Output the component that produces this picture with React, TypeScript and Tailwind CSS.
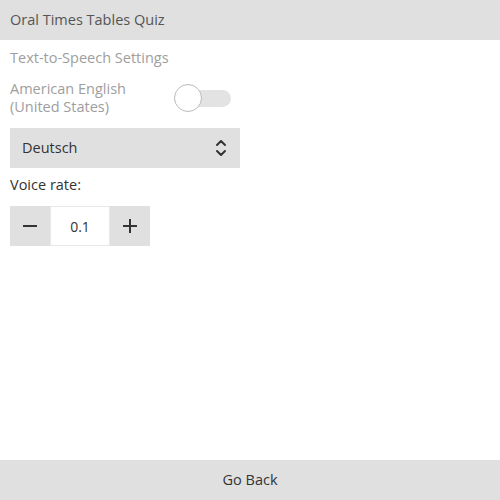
import { useState } from "react";

export default function App() {
  const [on, setOn] = useState(false);
  const [rate, setRate] = useState(0.1);

  return (
    <div className="h-[500px] w-[500px] flex flex-col bg-white text-[14.5px] font-['Open_Sans',sans-serif]">
      {/* Header */}
      <div className="h-10 shrink-0 bg-[#e0e0e0] flex items-center px-[10px] text-[#555]">
        Oral Times Tables Quiz
      </div>

      <div className="flex-1 flex flex-col px-[10px]">
        <div className="mt-2 h-5 text-[#9e9e9e] leading-5">Text-to-Speech Settings</div>

        <div className="mt-3 flex items-center w-[230px] h-9">
          <div className="w-[164px] text-[#9e9e9e] leading-[18px]">
            American English
            <br />
            (United States)
          </div>
          <button
            onClick={() => setOn(!on)}
            className="relative w-[57px] h-7 flex items-center"
          >
            <span className="absolute left-1 right-0 h-[17px] rounded-full bg-[#e3e3e3]" />
            <span
              className={
                "absolute top-0 w-7 h-7 rounded-full bg-white border border-[#bbb] " +
                (on ? "left-[29px]" : "left-0")
              }
            />
          </button>
        </div>

        <div className="mt-3 w-[230px] h-10 bg-[#e0e0e0] flex items-center justify-between pl-3 pr-[13px] text-[#333]">
          <span>Deutsch</span>
          <svg width="12" height="20" viewBox="0 0 12 20" fill="none" stroke="#333" strokeWidth="2" strokeLinecap="round" strokeLinejoin="round">
            <path d="M2 7l4-4 4 4" />
            <path d="M2 13l4 4 4-4" />
          </svg>
        </div>

        <div className="mt-[7px] h-5 leading-5 text-[#333]">Voice rate:</div>

        <div className="mt-[11px] flex h-10 w-[140px]">
          <button
            onClick={() => setRate(Math.max(0.1, +(rate - 0.1).toFixed(1)))}
            className="w-10 h-10 bg-[#e0e0e0] flex items-center justify-center"
          >
            <svg width="16" height="16" viewBox="0 0 16 16" stroke="#333" strokeWidth="2">
              <path d="M1 8h14" />
            </svg>
          </button>
          <div className="w-[60px] h-10 border border-[#e8e8e8] flex items-center justify-center text-[14px] text-[#333]">
            {rate.toFixed(1)}
          </div>
          <button
            onClick={() => setRate(+(rate + 0.1).toFixed(1))}
            className="w-10 h-10 bg-[#e0e0e0] flex items-center justify-center"
          >
            <svg width="16" height="16" viewBox="0 0 16 16" stroke="#333" strokeWidth="2">
              <path d="M1 8h14M8 1v14" />
            </svg>
          </button>
        </div>
      </div>

      {/* Footer */}
      <button className="h-10 shrink-0 bg-[#e0e0e0] flex items-center justify-center text-[#333]">
        Go Back
      </button>
    </div>
  );
}
